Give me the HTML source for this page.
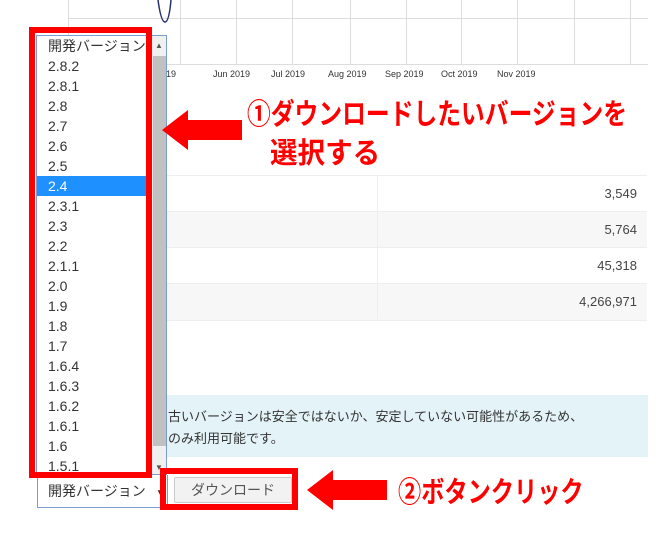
<!DOCTYPE html>
<html><head><meta charset="utf-8"><style>
body{margin:0;width:669px;height:559px;overflow:hidden;background:#fff;font-family:"Liberation Sans","Noto Sans CJK JP",sans-serif;position:relative}
.a{position:absolute}
.vl{position:absolute;top:0;width:1px;height:64px;background:#ddd}
.lbl{position:absolute;top:69px;font-size:9px;color:#333}
.row{position:absolute;left:160px;width:487px;height:36px;border-top:1px solid #eee;font-size:13px;color:#444}
.row span{position:absolute;right:10px;top:10px}
.list{position:absolute;left:36px;top:35px;width:131px;height:440px;border:1px solid #7a9cd3;box-sizing:border-box;background:#fff;overflow:hidden}
.it{height:20px;line-height:20px;font-size:14px;color:#333;padding-left:11px;width:99px}
.sel{background:#1e90ff;color:#fff}
.red{position:absolute;border:6px solid #f00;box-sizing:border-box}
.t{position:absolute;color:#f00;font-weight:bold;font-size:29px;line-height:34px;font-family:"Noto Sans CJK JP",sans-serif;white-space:nowrap;transform-origin:0 0}
</style></head><body>
<div class="a" style="left:68px;top:18px;width:580px;height:1px;background:#ddd"></div>
<div class="a" style="left:68px;top:64px;width:580px;height:1px;background:#ddd"></div>
<div class="vl" style="left:68px"></div><div class="vl" style="left:180px"></div><div class="vl" style="left:236px"></div><div class="vl" style="left:292px"></div><div class="vl" style="left:350px"></div><div class="vl" style="left:406px"></div><div class="vl" style="left:461px"></div><div class="vl" style="left:517px"></div><div class="vl" style="left:574px"></div><div class="vl" style="left:630px"></div>
<svg class="a" style="left:155px;top:0" width="20" height="25"><path d="M3 0 Q6 22 10 22 Q14 22 16 0" fill="none" stroke="#2a2f6e" stroke-width="1.5"/></svg>
<div class="lbl" style="left:166px">19</div><div class="lbl" style="left:213px">Jun 2019</div><div class="lbl" style="left:271px">Jul 2019</div><div class="lbl" style="left:328px">Aug 2019</div><div class="lbl" style="left:385px">Sep 2019</div><div class="lbl" style="left:441px">Oct 2019</div><div class="lbl" style="left:497px">Nov 2019</div>
<div class="row" style="top:175px"><span>3,549</span></div>
<div class="row" style="top:211px;background:#f7f7f7"><span>5,764</span></div>
<div class="row" style="top:247px"><span>45,318</span></div>
<div class="row" style="top:283px;background:#f7f7f7;border-bottom:1px solid #eee"><span>4,266,971</span></div>
<div class="a" style="left:377px;top:175px;width:1px;height:144px;background:#eee"></div>
<div class="a" style="left:160px;top:395px;width:488px;height:62px;background:#e4f3f8;font-size:13px;color:#333;line-height:22px;padding:10px 0 0 8px;box-sizing:border-box;font-family:'Noto Sans CJK JP',sans-serif">古いバージョンは安全ではないか、安定していない可能性があるため、<br>のみ利用可能です。</div>
<div class="list">
<div class="it">開発バージョン</div><div class="it">2.8.2</div><div class="it">2.8.1</div><div class="it">2.8</div><div class="it">2.7</div><div class="it">2.6</div><div class="it">2.5</div><div class="it sel">2.4</div><div class="it">2.3.1</div><div class="it">2.3</div><div class="it">2.2</div><div class="it">2.1.1</div><div class="it">2.0</div><div class="it">1.9</div><div class="it">1.8</div><div class="it">1.7</div><div class="it">1.6.4</div><div class="it">1.6.3</div><div class="it">1.6.2</div><div class="it">1.6.1</div><div class="it">1.6</div><div class="it">1.5.1</div>
<div class="a" style="left:115px;top:0;width:15px;height:440px;background:#f0f0f0"></div>
<div class="a" style="left:116px;top:20px;width:13px;height:390px;background:#c1c1c1"></div>
<div class="a" style="left:118px;top:5px;font-size:8px;color:#555">▲</div>
<div class="a" style="left:118px;top:427px;font-size:8px;color:#555">▼</div>
</div>
<div class="a" style="left:37px;top:475px;width:131px;height:33px;border:1px solid #7a9cd3;border-top:none;box-sizing:border-box;font-size:14px;color:#333;line-height:32px;padding-left:10px">開発バージョン <span style="font-size:10px;margin-left:6px">▼</span></div>
<div class="a" style="left:174px;top:477px;width:118px;height:26px;border:1px solid #ccc;border-radius:2px;background:#f2f2f2;box-sizing:border-box;font-size:14px;color:#555;text-align:center;line-height:24px">ダウンロード</div>
<div class="red" style="left:29px;top:27px;width:123px;height:451px"></div>
<div class="red" style="left:160px;top:468px;width:138px;height:42px"></div>
<svg class="a" style="left:160px;top:108px" width="82" height="44"><polygon points="2,22 28,2 28,12 82,12 82,32 28,32 28,42" fill="#f00"/></svg>
<svg class="a" style="left:305px;top:468px" width="82" height="44"><polygon points="2,22 28,2 28,12 82,12 82,32 28,32 28,42" fill="#f00"/></svg>
<div class="t" style="left:247px;top:95px;transform:scaleX(0.82)">①ダウンロードしたいバージョンを</div>
<div class="t" style="left:270px;top:134px;transform:scaleX(0.95)">選択する</div>
<div class="t" style="left:398px;top:473px;transform:scaleX(0.8)">②ボタンクリック</div>
</body></html>
